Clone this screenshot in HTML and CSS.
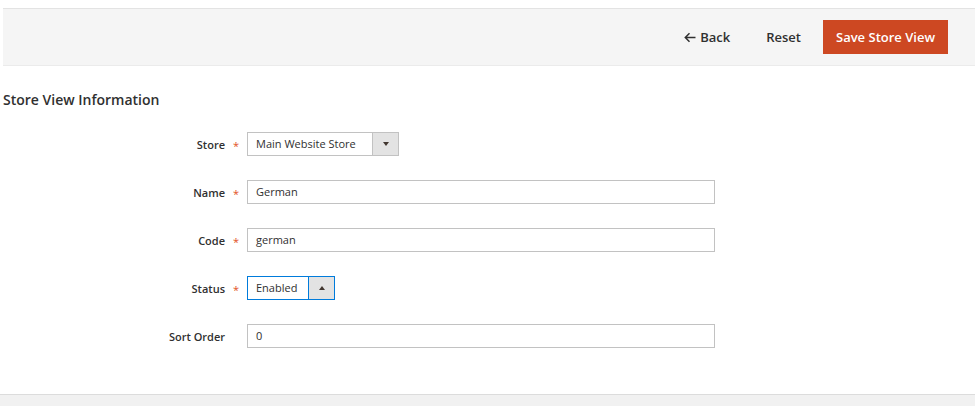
FILE: index.html
```html
<!DOCTYPE html>
<html lang="en">
<head>
    <meta charset="UTF-8">
    <meta name="viewport" content="width=device-width, initial-scale=1.0">
    <title>Store View Information</title>
    <link rel="stylesheet" href="styles.css">
</head>
<body>
    <div class="page-actions">
        <button class="action-link back">
            <svg width="12" height="11" viewBox="0 0 12 11"><path d="M11.5 5.5H1.5M5.5 1.3L1.3 5.5 5.5 9.7" fill="none" stroke="#303030" stroke-width="1.5"/></svg>
            Back
        </button>
        <button class="action-link reset">Reset</button>
        <button class="action-primary">Save Store View</button>
    </div>

    <h2 class="fieldset-title">Store View Information</h2>

    <div class="form">
        <div class="field">
            <label>Store</label>
            <span class="required">*</span>
            <div class="select store-select">
                <span class="value">Main Website Store</span>
                <span class="arrow"><i class="caret down"></i></span>
            </div>
        </div>
        <div class="field">
            <label>Name</label>
            <span class="required">*</span>
            <div class="input wide">German</div>
        </div>
        <div class="field">
            <label>Code</label>
            <span class="required">*</span>
            <div class="input wide">german</div>
        </div>
        <div class="field">
            <label>Status</label>
            <span class="required">*</span>
            <div class="select status-select focused">
                <span class="value">Enabled</span>
                <span class="arrow"><i class="caret up"></i></span>
            </div>
        </div>
        <div class="field">
            <label>Sort Order</label>
            <span class="required"></span>
            <div class="input wide">0</div>
        </div>
    </div>

    <div class="footer"></div>
</body>
</html>
```

FILE: styles.css
```css
body {
    margin: 0;
    font-family: 'Open Sans', 'Liberation Sans', sans-serif;
    color: #303030;
    background-color: #fff;
}

.page-actions {
    margin: 8px 0 0 3px;
    height: 58px;
    box-sizing: border-box;
    background-color: #f5f5f5;
    border-top: 1px solid #e3e3e3;
    border-bottom: 1px solid #ebebeb;
    display: flex;
    align-items: center;
    justify-content: flex-end;
    padding-right: 27px;
}

.page-actions button {
    font-family: inherit;
    font-weight: 600;
    font-size: 13px;
    border: none;
    cursor: pointer;
}

.action-link {
    background: none;
    color: #303030;
    padding: 0;
    display: flex;
    align-items: center;
    gap: 4px;
}

.back {
    margin-right: 36px;
}

.reset {
    margin-right: 22px;
}

.action-primary {
    background-color: #cd4822;
    color: #fff;
    width: 125px;
    height: 34px;
    padding: 0;
}

.fieldset-title {
    margin: 24px 0 0 3px;
    font-size: 14px;
    line-height: 20px;
    font-weight: 600;
    color: #303030;
}

.form {
    margin-top: 22px;
    display: flex;
    flex-direction: column;
    gap: 24px;
}

.field {
    display: grid;
    grid-template-columns: 225px 22px auto;
    align-items: center;
    height: 24px;
}

.field label {
    text-align: right;
    font-size: 11px;
    font-weight: 600;
    color: #303030;
}

.required {
    color: #e2511d;
    font-size: 11px;
    text-align: center;
    padding-top: 2px;
}

.input,
.select {
    box-sizing: border-box;
    height: 24px;
    border: 1px solid #c2c2c2;
    font-size: 11px;
    line-height: 22px;
    color: #303030;
    background-color: #fff;
}

.input {
    padding-left: 8px;
}

.wide {
    width: 468px;
}

.select {
    display: flex;
}

.select .value {
    flex: 1;
    padding-left: 8px;
}

.select .arrow {
    width: 25px;
    border-left: 1px solid #c2c2c2;
    background-color: #e3e3e3;
    display: flex;
    align-items: center;
    justify-content: center;
}

.caret {
    width: 0;
    height: 0;
    border-left: 3.5px solid transparent;
    border-right: 3.5px solid transparent;
}

.caret.down {
    border-top: 4px solid #41362f;
}

.caret.up {
    border-bottom: 4px solid #41362f;
}

.store-select {
    width: 152px;
}

.status-select {
    width: 88px;
}

.focused {
    border-color: #007bdb;
}

.focused .arrow {
    border-left-color: #007bdb;
}

.footer {
    margin-top: 46px;
    height: 11px;
    border-top: 1px solid #dcdcdc;
    background-color: #f1f1f1;
}
```
